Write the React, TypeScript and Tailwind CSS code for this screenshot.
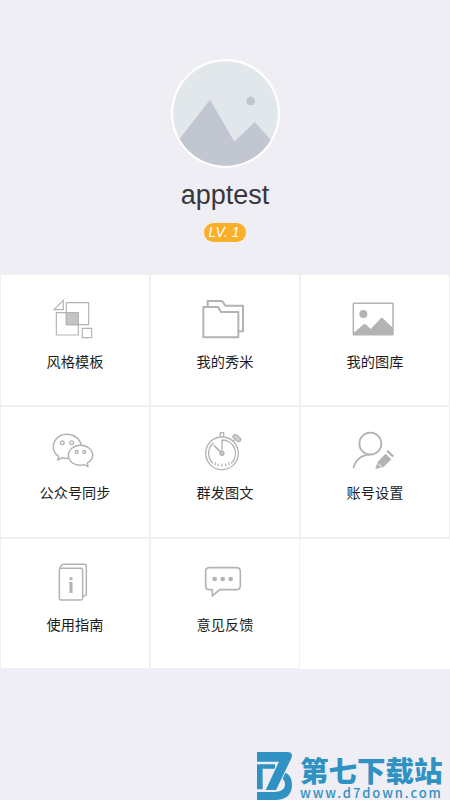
import type { ReactNode } from "react";
import { clsx } from "clsx";

function Icon({ children, width = 5 }: { children: ReactNode; width?: number }) {
  return (
    <svg
      viewBox="0 0 150 138"
      className="h-[46px] w-[50px] text-[#b3b3b3]"
      fill="none"
      stroke="currentColor"
      strokeWidth={width}
      strokeLinejoin="round"
    >
      {children}
    </svg>
  );
}

const items: { label: string; icon: ReactNode }[] = [
  {
    label: "风格模板",
    icon: (
      <Icon width={3.5}>
        <path d="M12 47L40 19V47Z" strokeLinejoin="miter" />
        <rect x="49" y="26" width="67" height="66" />
        <rect x="19" y="56" width="66" height="67" />
        <rect x="49" y="56" width="36" height="36" fill="#c4c4c4" />
        <rect x="97" y="103" width="28" height="28" />
      </Icon>
    ),
  },
  {
    label: "我的秀米",
    icon: (
      <Icon width={6}>
        <path d="M10 39H54L63 54H115V130H10Z" />
        <path d="M23 39V21H66L76 35H129V112H116" />
      </Icon>
    ),
  },
  {
    label: "我的图库",
    icon: (
      <Icon width={4.5}>
        <rect x="10" y="28" width="119" height="94" rx="1" />
        <circle cx="40" cy="60" r="12" fill="currentColor" stroke="none" />
        <path
          d="M10 118L39 92Q44 88 49 92L62 105L91 74Q95 69 100 74L129 102V122H10Z"
          fill="currentColor"
          stroke="none"
        />
      </Icon>
    ),
  },
  {
    label: "公众号同步",
    icon: (
      <Icon width={4.5}>
        <path d="M93 57C90 38 73 25 51 25C28 25 10 41 10 62C10 75 16 85 26 91L23 102L37 95Q46 98 56 97" />
        <path d="M92 58C71 58 55 71 55 88C55 105 71 118 92 118Q98 118 103 116L114 122L112 111C122 105 128 98 128 88C128 71 112 58 92 58Z" />
        <circle cx="37" cy="50" r="5.5" strokeWidth="4" />
        <circle cx="65" cy="50" r="5.5" strokeWidth="4" />
        <circle cx="80" cy="78" r="4.5" strokeWidth="4" />
        <circle cx="103" cy="78" r="4.5" strokeWidth="4" />
      </Icon>
    ),
  },
  {
    label: "群发图文",
    icon: (
      <Icon width={4}>
        <circle cx="66" cy="82" r="49" />
        <path d="M66 78V42A40 40 0 0 1 93 112M39 112A40 40 0 0 1 41 51" />
        <path d="M61 32V20H71V32M98 46L104 41" />
        <path d="M101 27Q106 24 111 28L121 37Q125 41 121 45Q116 48 111 45L101 37Q97 32 101 27Z" fill="#cfcfcf" />
        <path d="M42 58L63 79" strokeWidth="5" />
        <circle cx="66" cy="82" r="6" fill="#c4c4c4" />
        <path d="M47 109L44 118M56 112L54 121M66 113V122M76 112L78 121M85 109L89 118" strokeWidth="3.5" />
      </Icon>
    ),
  },
  {
    label: "账号设置",
    icon: (
      <Icon width={5.5}>
        <circle cx="61" cy="53" r="33" />
        <path d="M10 127C17 101 31 87 60 86" />
        <g fill="currentColor" stroke="none">
          <path d="M83 107L107 83L124 100L101 123L76 129Z" />
          <path d="M109 77L114 72L132 89L127 94Z" />
        </g>
        <path d="M83 112L96 124" stroke="white" strokeWidth="3" />
      </Icon>
    ),
  },
  {
    label: "使用指南",
    icon: (
      <Icon width={4.5}>
        <path d="M33 31H93Q98 31 98 36V121Q98 126 93 126H33Q28 126 28 121V36Q28 31 33 31Z" />
        <path d="M29 34Q31 19 44 19H103Q109 19 109 25V108Q109 114 99 114" />
        <circle cx="63" cy="62" r="5" fill="currentColor" stroke="none" />
        <path d="M57 74H63M57 102H69" strokeWidth="3" />
        <path d="M63 72V104" strokeWidth="9" />
      </Icon>
    ),
  },
  {
    label: "意见反馈",
    icon: (
      <Icon>
        <path d="M29 29H109Q121 29 121 41V83Q121 95 109 95H59L37 114V95H29Q17 95 17 83V41Q17 29 29 29Z" />
        <g fill="currentColor" stroke="none">
          <circle cx="44" cy="63" r="7" />
          <circle cx="68" cy="63" r="7" />
          <circle cx="92" cy="63" r="7" />
        </g>
      </Icon>
    ),
  },
];

function Avatar() {
  return (
    <svg viewBox="0 0 327 327" className="h-[109px] w-[109px]">
      <defs>
        <clipPath id="avatar">
          <circle cx="163.5" cy="163.5" r="157" />
        </clipPath>
      </defs>
      <circle cx="163.5" cy="163.5" r="163.5" fill="white" />
      <g clipPath="url(#avatar)">
        <rect width="327" height="327" fill="#e1e7ea" />
        <path d="M0 260L30 234L117 122L190 248L251 189L297 240L327 265V327H0Z" fill="#c2c6d0" />
        <circle cx="239" cy="126" r="13" fill="#c2c6d0" />
      </g>
    </svg>
  );
}

function Watermark() {
  return (
    <div className="flex h-[48px] items-start pl-[257px] text-[#2f92c3]">
      <svg viewBox="0 0 105 144" className="h-12 w-[35px] shrink-0" fill="currentColor">
        <path d="M0 37H54V50H17V112H0Z" />
        <path d="M0 120H50C74 120 84 111 84 97C84 88 80 82 74 79L83 61C98 68 105 80 105 98C105 128 87 144 54 144H0Z" />
        <path
          d="M-6 0H90Q110 0 103 19L57 114H26L66 29H-6Z"
          stroke="#efeef4"
          strokeWidth="6"
          paintOrder="stroke"
        />
      </svg>
      <div className="ml-2 flex flex-col pt-px">
        <div className="h-[33px] whitespace-nowrap font-['Noto_Sans_CJK_SC',sans-serif] text-[28.5px] leading-[33px] font-black">
          第七下载站
        </div>
        <div className="font-['Noto_Sans_CJK_SC',sans-serif] text-[13px] leading-[14px] font-medium tracking-[1.9px]">
          www.d7down.com
        </div>
      </div>
    </div>
  );
}

export default function App() {
  return (
    <div className="flex h-[800px] w-[450px] flex-col overflow-hidden bg-[#efeef4] font-['Liberation_Sans','Noto_Sans_CJK_SC',sans-serif]">
      <header className="flex h-[274px] flex-col items-center pt-[59px]">
        <Avatar />
        <h1 className="mt-[9px] text-[27px] leading-9 text-[#37373c]">apptest</h1>
        <span className="mt-2.5 flex h-[19px] w-[42px] items-center justify-center rounded-full bg-[#fbae28] pr-0.5 text-[14px] text-white italic">
          LV. 1
        </span>
      </header>

      <main className="grid grid-cols-3 grid-rows-[132px_132px_131px]">
        {items.map((item, i) => (
          <div
            key={item.label}
            className="flex flex-col items-center border border-[#f0f0f2] bg-white pt-[19px]"
          >
            {item.icon}
            <span
              className={clsx(
                "text-[14.2px] leading-5 text-[#1c1c1c]",
                i < 3 ? "mt-3" : "mt-[11px]",
              )}
            >
              {item.label}
            </span>
          </div>
        ))}
        <div className="mt-px bg-white" />
      </main>

      <footer className="mt-auto">
        <Watermark />
      </footer>
    </div>
  );
}
